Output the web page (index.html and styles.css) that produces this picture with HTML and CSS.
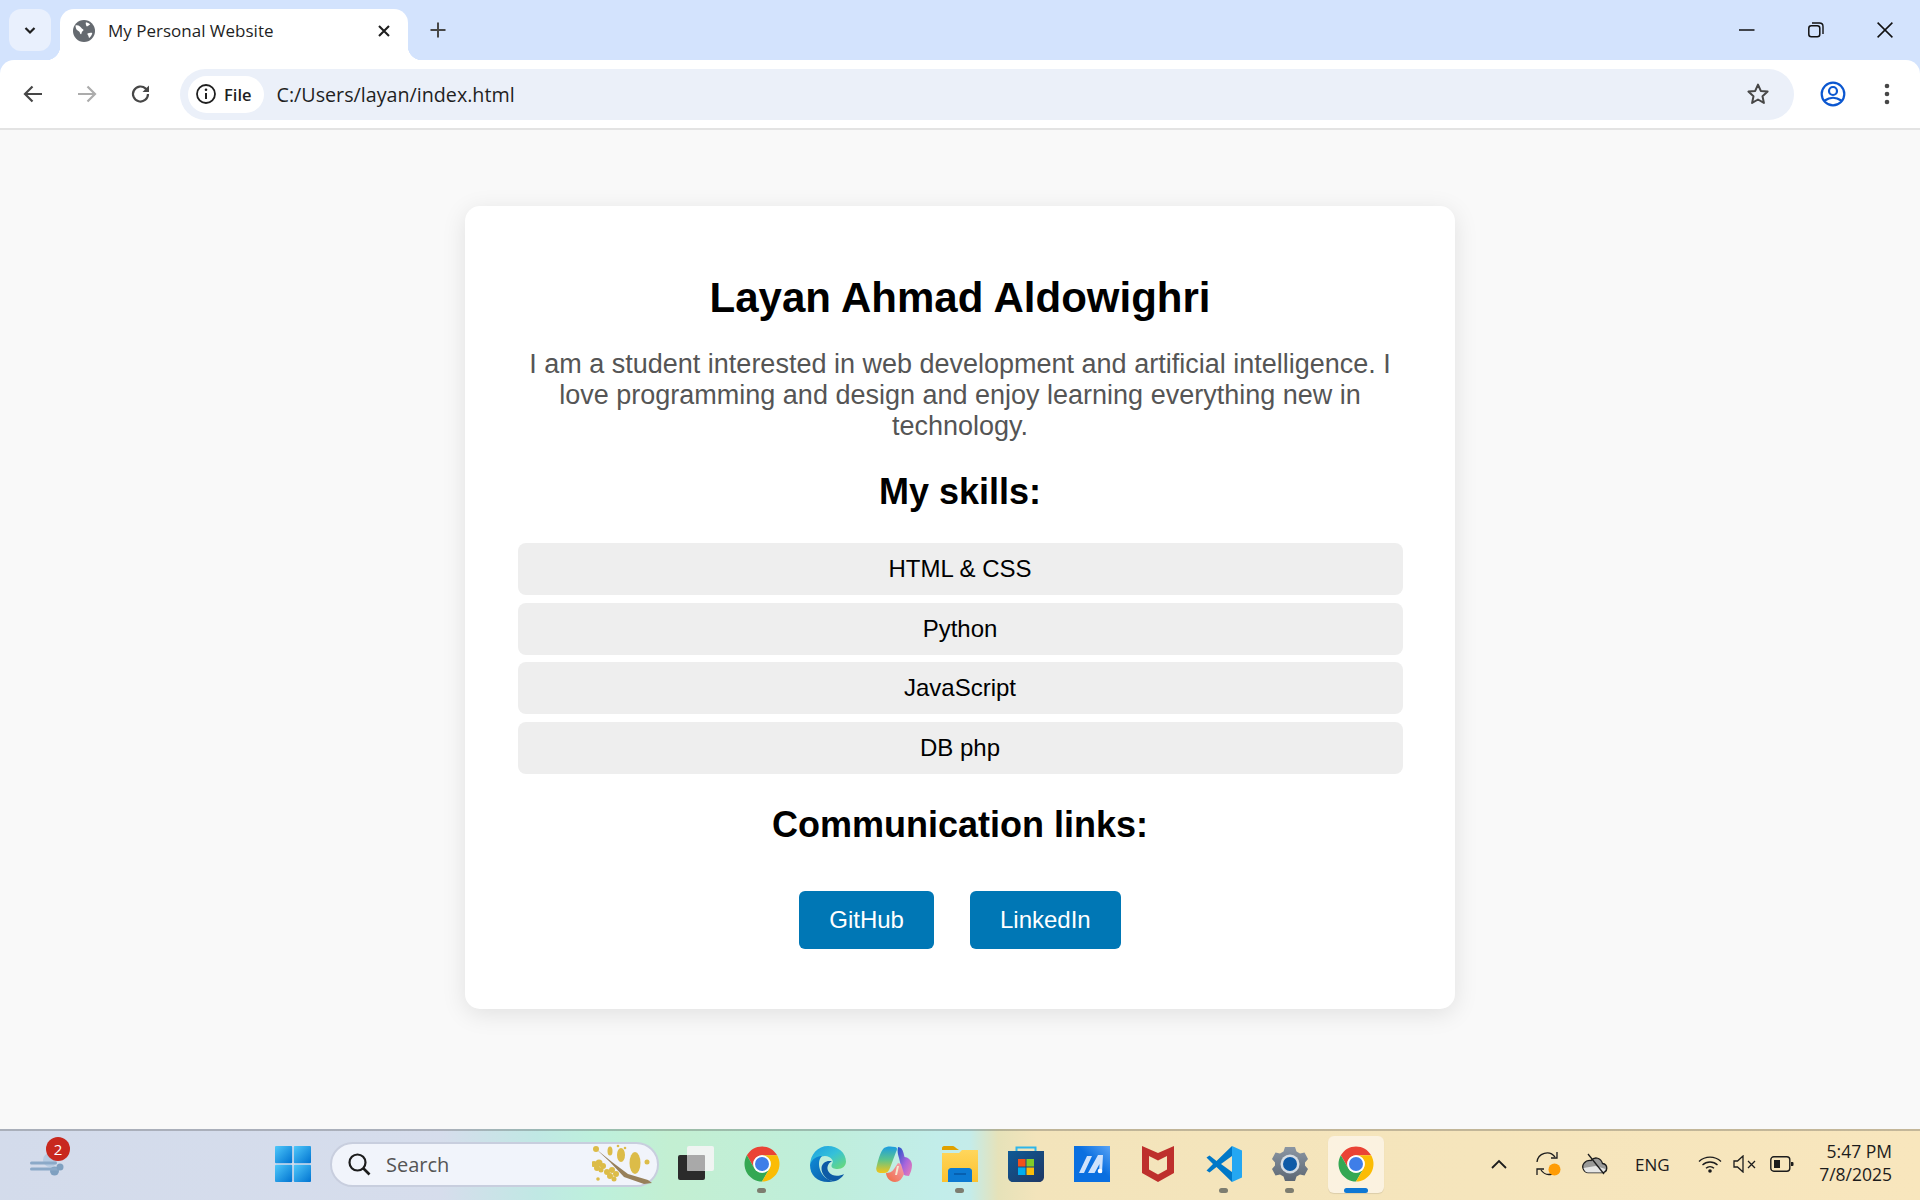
FILE: index.html
```html
<!DOCTYPE html>
<html lang="en">
<head>
  <meta charset="UTF-8">
  <meta name="viewport" content="width=device-width, initial-scale=1.0">
  <title>My Personal Website</title>
  <link rel="stylesheet" href="styles.css">
</head>
<body>

  <svg class="defs" width="0" height="0" aria-hidden="true">
    <symbol id="chrome" viewBox="0 0 48 48">
      <path fill="#ea4335" d="M6.68 14A20 20 0 0 1 41.32 14H24A10 10 0 0 0 15.34 29Z"/>
      <path fill="#34a853" d="M6.68 14A20 20 0 0 0 24 44L32.66 29A10 10 0 0 1 15.34 29Z"/>
      <path fill="#fbbc04" d="M41.32 14H24A10 10 0 0 1 32.66 29L24 44A20 20 0 0 0 41.32 14Z"/>
      <circle cx="24" cy="24" r="10" fill="#fff"/>
      <circle cx="24" cy="24" r="8" fill="#3f7ee8"/>
    </symbol>
    <linearGradient id="edge-top" x1="0" y1="0" x2="1" y2="1">
      <stop offset="0" stop-color="#1b9de2"/>
      <stop offset=".5" stop-color="#35c1d9"/>
      <stop offset="1" stop-color="#6fdc6e"/>
    </linearGradient>
    <linearGradient id="edge-low" x1="0" y1="0" x2="1" y2="1">
      <stop offset="0" stop-color="#0f8bd8"/>
      <stop offset="1" stop-color="#0c59a4"/>
    </linearGradient>
    <linearGradient id="cop-a" x1="0" y1="0" x2="0" y2="1">
      <stop offset="0" stop-color="#1b9de2"/>
      <stop offset=".5" stop-color="#5cc48c"/>
      <stop offset="1" stop-color="#f5c518"/>
    </linearGradient>
    <linearGradient id="cop-b" x1="0" y1="0" x2="1" y2="1">
      <stop offset="0" stop-color="#1a55c8"/>
      <stop offset=".55" stop-color="#a865dc"/>
      <stop offset="1" stop-color="#f07fb0"/>
    </linearGradient>
    <linearGradient id="cop-c" x1="0" y1="1" x2="1" y2="0">
      <stop offset="0" stop-color="#f06a3c"/>
      <stop offset="1" stop-color="#f4a0b8"/>
    </linearGradient>
    <linearGradient id="win-grad" x1="0" y1="0" x2="1" y2="1">
      <stop offset="0" stop-color="#4fc8fa"/>
      <stop offset="1" stop-color="#0073d1"/>
    </linearGradient>
    <linearGradient id="folder-grad" x1="0" y1="0" x2="0" y2="1">
      <stop offset="0" stop-color="#ffd65c"/>
      <stop offset="1" stop-color="#fcc12e"/>
    </linearGradient>
    <linearGradient id="store-grad" x1="0" y1="0" x2="1" y2="1">
      <stop offset="0" stop-color="#0f5a96"/>
      <stop offset="1" stop-color="#1f3764"/>
    </linearGradient>
    <linearGradient id="ma-grad" x1="0" y1="1" x2="1" y2="0">
      <stop offset=".55" stop-color="#0a6fe0"/>
      <stop offset="1" stop-color="#5aa4f5"/>
    </linearGradient>
    <linearGradient id="gear-grad" x1="0" y1="0" x2="0" y2="1">
      <stop offset="0" stop-color="#8b96a3"/>
      <stop offset="1" stop-color="#5d6874"/>
    </linearGradient>
  </svg>

  <div class="window">
    <header class="browser">
      <div class="tabstrip">
        <button class="tab-search">
          <svg width="14" height="14" viewBox="0 0 14 14"><path d="M2.5 5l4.5 4.5L11.5 5" fill="none" stroke="#1f1f1f" stroke-width="2.2"/></svg>
        </button>
        <div class="tab">
          <svg width="24" height="24" viewBox="0 0 24 24">
            <circle cx="12" cy="12" r="11" fill="#656a70"/>
            <path fill="#fff" d="M3.500 6.500c1.800-.4 3.200 0 4.500 1 1.200.9 1.400 1.800 2.600 2.400 1.300.6 1 1.800-.1 2.400-.8.400-.6 1.600-1.200 2.600-.6.800-1.200-.4-1.500-1.500-.3-1.200-1.600-1.300-2.500-2.100C4.100 10.500 3.500 8 3.500 6.500zM14 3.200c1.600.3 3 1 4.200 2-.6 1-1.800 1.100-2.500 1.900-.6.700-1.300.2-1.500-.6-.2-1-.8-2.300-.2-3.300zM15.500 14.500c1.200-.7 3.200-.9 4.800-.6-.4 2.100-1.500 3.800-3.100 5.100-.7-.7-.4-1.800-1-2.600-.4-.6-1.100-1.300-.7-1.900z"/>
          </svg>
          <span class="tab-title">My Personal Website</span>
          <svg class="tab-close" width="14" height="14" viewBox="0 0 14 14"><path d="M2 2l10 10M12 2L2 12" stroke="#1f1f1f" stroke-width="2.100"/></svg>
        </div>
        <button class="new-tab">
          <svg width="18" height="18" viewBox="0 0 18 18"><path d="M9 1.500v15M1.500 9h15" stroke="#474747" stroke-width="2"/></svg>
        </button>
        <div class="win-controls">
          <span class="win-btn"><svg width="16" height="16" viewBox="0 0 16 16"><path d="M0 8h15.500" stroke="#111" stroke-width="1.500"/></svg></span>
          <span class="win-btn"><svg width="16" height="16" viewBox="0 0 16 16"><rect x=".8" y="3.800" width="11" height="11" rx="2.500" fill="none" stroke="#111" stroke-width="1.500"/><path d="M4 1h7.500c2 0 3.500 1.500 3.500 3.500V12" fill="none" stroke="#111" stroke-width="1.400"/></svg></span>
          <span class="win-btn"><svg width="16" height="16" viewBox="0 0 16 16"><path d="M.6.6l14.800 14.800M15.400.6L.6 15.400" stroke="#111" stroke-width="1.500"/></svg></span>
        </div>
      </div>

      <div class="toolbar">
        <button class="tool-btn">
          <svg width="22" height="22" viewBox="0 0 22 22"><path d="M20 11H3M10.500 3.500L3 11l7.500 7.500" fill="none" stroke="#474747" stroke-width="2.200"/></svg>
        </button>
        <button class="tool-btn">
          <svg width="22" height="22" viewBox="0 0 22 22"><path d="M2 11h17M11.500 3.500L19 11l-7.500 7.500" fill="none" stroke="#acacac" stroke-width="2.200"/></svg>
        </button>
        <button class="tool-btn">
          <svg width="22" height="22" viewBox="0 0 22 22"><path d="M18 11a7.500 7.500 0 1 1-2.300-5.400L18 8" fill="none" stroke="#474747" stroke-width="2.200"/><path d="M19 2.500V9h-6.500z" fill="#474747"/></svg>
        </button>
        <div class="omnibox">
          <div class="file-chip">
            <svg width="22" height="22" viewBox="0 0 22 22"><circle cx="11" cy="11" r="9" fill="none" stroke="#1f1f1f" stroke-width="1.800"/><path d="M11 10v6" stroke="#1f1f1f" stroke-width="2"/><circle cx="11" cy="6.800" r="1.300" fill="#1f1f1f"/></svg>
            <span>File</span>
          </div>
          <span class="url">C:/Users/layan/index.html</span>
          <svg class="star" width="24" height="24" viewBox="0 0 24 24"><path d="M12 2.600l2.800 6.300 6.800.7-5.100 4.600 1.400 6.700-5.900-3.400-5.900 3.400 1.400-6.700-5.100-4.600 6.800-.7z" fill="none" stroke="#474747" stroke-width="2" stroke-linejoin="round"/></svg>
        </div>
        <button class="tool-btn">
          <svg width="26" height="26" viewBox="0 0 26 26"><circle cx="13" cy="13" r="11.300" fill="none" stroke="#0b57d0" stroke-width="2.200"/><circle cx="13" cy="10" r="4" fill="none" stroke="#0b57d0" stroke-width="2.200"/><path d="M4.800 19.500c5-3.600 11.400-3.600 16.400 0" fill="none" stroke="#0b57d0" stroke-width="2.200"/></svg>
        </button>
        <button class="tool-btn">
          <svg width="6" height="24" viewBox="0 0 6 24"><circle cx="3" cy="4" r="2.300" fill="#474747"/><circle cx="3" cy="12" r="2.300" fill="#474747"/><circle cx="3" cy="20" r="2.300" fill="#474747"/></svg>
        </button>
      </div>
    </header>

    <main class="page">
      <section class="card">
        <h1>Layan Ahmad Aldowighri</h1>
        <p class="bio">I am a student interested in web development and artificial intelligence. I love programming and design and enjoy learning everything new in technology.</p>
        <h2 class="skills-title">My skills:</h2>
        <ul class="skills">
          <li>HTML &amp; CSS</li>
          <li>Python</li>
          <li>JavaScript</li>
          <li>DB php</li>
        </ul>
        <h2 class="links-title">Communication links:</h2>
        <div class="links">
          <a href="#">GitHub</a>
          <a href="#">LinkedIn</a>
        </div>
      </section>
    </main>

    <footer class="taskbar">
      <div class="weather">
        <svg width="36" height="36" viewBox="0 0 36 36">
          <circle cx="20" cy="14" r="7" fill="#b6cbe2"/>
          <circle cx="24.500" cy="25" r="4.500" fill="#7fa0c0"/>
          <path d="M1.500 17h24M1.500 23h26" stroke="#8ba9c8" stroke-width="3" stroke-linecap="round"/>
          <circle cx="30" cy="21" r="3.500" fill="#7fa0c0"/>
        </svg>
        <span class="badge">2</span>
      </div>

      <span class="start">
        <svg width="36" height="36" viewBox="0 0 36 36">
          <rect x="0" y="0" width="17.200" height="17.200" rx="1" fill="url(#win-grad)"/>
          <rect x="18.800" y="0" width="17.200" height="17.200" rx="1" fill="url(#win-grad)"/>
          <rect x="0" y="18.800" width="17.200" height="17.200" rx="1" fill="url(#win-grad)"/>
          <rect x="18.800" y="18.800" width="17.200" height="17.200" rx="1" fill="url(#win-grad)"/>
        </svg>
      </span>

      <div class="search">
        <svg width="24" height="24" viewBox="0 0 24 24"><circle cx="10.500" cy="10.500" r="8" fill="none" stroke="#1c1c1c" stroke-width="2.200"/><path d="M16 16l6.500 6.500" stroke="#1c1c1c" stroke-width="2.600"/></svg>
        <span>Search</span>
        <svg class="twig" width="62" height="42" viewBox="0 0 62 42">
          <path d="M4 6l16 13 16 12 20 6 4 3-8 1-20-7-14-15z" fill="#97805a"/>
          <g fill="#dcbc48">
            <circle cx="2" cy="21" r="3"/><circle cx="7" cy="20" r="3.500"/><circle cx="11" cy="23" r="3"/><circle cx="5" cy="25" r="3"/><circle cx="9" cy="27" r="2.500"/>
            <circle cx="15" cy="29" r="3"/><circle cx="20" cy="27" r="3"/><circle cx="24" cy="31" r="3"/><circle cx="18" cy="33" r="3"/><circle cx="22" cy="36" r="2.500"/>
            <ellipse cx="29" cy="12" rx="4" ry="7"/>
            <ellipse cx="43" cy="20" rx="5.500" ry="11"/>
            <ellipse cx="18" cy="8" rx="2.500" ry="4.500"/>
            <circle cx="4" cy="6" r="3"/>
            <circle cx="55" cy="19" r="2.500"/>
            <circle cx="6" cy="36" r="1.800"/>
            <circle cx="26" cy="3" r="1.300"/>
            <circle cx="33" cy="5" r="1.300"/>
          </g>
        </svg>
      </div>

      <div class="apps">
        <span class="app">
          <svg width="36" height="36" viewBox="0 0 36 36">
            <rect x="0" y="9" width="27" height="25" rx="2" fill="#2b2b2b"/>
            <rect x="9" y="0" width="27" height="25" rx="2" fill="#f4f4f4" fill-opacity=".92"/>
            <rect x="9" y="9" width="18" height="16" rx="1" fill="#a9a9a9"/>
          </svg>
        </span>
        <span class="app open">
          <svg width="36" height="36"><use href="#chrome" x="-3" y="-3" width="42" height="42"/></svg>
        </span>
        <span class="app">
          <svg width="36" height="36" viewBox="0 0 36 36">
            <path fill="url(#edge-top)" d="M18 0C28 0 36 7 36 15.500c0 4.500-3.500 7.500-8.500 7.500-3.500 0-6-1-6-3 0-2.500 2.500-3.500.5-6.500C20 10.500 16 9 11.500 10.500 5 12.500 1 18 0 20 0 8 8 0 18 0z"/>
            <path fill="url(#edge-low)" d="M0 19C2 12 8 10 12 10c-3 3-3.500 7-2.500 12 1.500 7 8 13 15 13.300C22 35.800 20 36 18 36 7 36 0 29 0 19z"/>
            <path fill="#0d5ba6" d="M22 15.500c-4.500-1.500-10 1-10.500 6.500-.4 6 5.500 13 12.500 13.200 4-.4 8-3.400 10-7.200-3 1.700-8 2.500-11.500 1-3.500-1.500-5.500-5-5-8 .4-2.500 2-5 4.500-5.500z"/>
          </svg>
        </span>
        <span class="app">
          <svg width="36" height="36" viewBox="0 0 36 36">
            <path fill="url(#cop-a)" d="M8 2c2-1.500 6-2 11-1 3 .5 2 3 1 5l-6 16c-1 3-3 5-6 5H4c-3 0-4.500-3-3.500-6C2 15 4 6 8 2z"/>
            <path fill="url(#cop-b)" d="M22 1c3 0 4.500 2 5.500 6l1 4c3 0 7.500 3 7.500 8 0 4-1.500 8-3 11-3 0-5-1-6-2l-4-16c-1-3-2-7-1-11z"/>
            <path fill="url(#cop-c)" d="M10 27c3 0 6-1 8-4l4-6 3 1 3 10c-2 5-5 8-9 8-6 0-9-6-9-9z"/>
            <path fill="#f4e8d0" d="M19 29l2-9h2l-2 9z"/>
          </svg>
        </span>
        <span class="app open">
          <svg width="36" height="36" viewBox="0 0 36 36">
            <path fill="#e0a100" d="M0 2c0-1 .8-2 2-2h9c1 0 2 1 3 2l3 2h-17z"/>
            <path fill="url(#folder-grad)" d="M0 7h17l3-3h16v32H0z"/>
            <path fill="#0c7ad2" d="M6 36V25c0-1.600 1.400-3 3-3h18c1.600 0 3 1.400 3 3v11z"/>
            <path stroke="#0558a5" stroke-width="1.500" d="M12 28h12"/>
          </svg>
        </span>
        <span class="app">
          <svg width="36" height="36" viewBox="0 0 36 36">
            <path d="M8.500 7V1.500h19V7" fill="none" stroke="#2eb6ea" stroke-width="2"/>
            <path fill="url(#store-grad)" d="M0 5h36v26c0 2.500-2 5-4.500 5h-27C2 36 0 33.500 0 31z"/>
            <rect x="10" y="13" width="7.500" height="7.500" fill="#f1511b"/>
            <rect x="18.500" y="13" width="7.500" height="7.500" fill="#80cc28"/>
            <rect x="10" y="21.500" width="7.500" height="7.500" fill="#00adef"/>
            <rect x="18.500" y="21.500" width="7.500" height="7.500" fill="#fbbc09"/>
          </svg>
        </span>
        <span class="app">
          <svg width="36" height="36" viewBox="0 0 36 36">
            <rect width="36" height="36" fill="url(#ma-grad)"/>
            <path fill="#cfe2fb" d="M5 27l8-17h5L10 27zM14 27l10-18h5l-1 18h-3l.5-9-5 9z"/>
            <circle cx="26" cy="25" r="2.300" fill="#fff"/>
          </svg>
        </span>
        <span class="app">
          <svg width="32" height="36" viewBox="0 0 32 36">
            <path fill="#be2f2c" fill-rule="evenodd" d="M0 0l16 7 16-7v27l-16 9-16-9zM7 10v13.500l9 5 9-5V10l-9 4.500z"/>
          </svg>
        </span>
        <span class="app open">
          <svg width="36" height="36" viewBox="0 0 36 36">
            <path fill="#0078c8" d="M26 0L10.500 15 3.500 9.500.5 11.500 7 18 .5 24.500l3 2 7-5.500L26 36V26L15 18 26 10z"/>
            <path fill="#24a7f2" d="M26 0l10 4.500v27L26 36z"/>
          </svg>
        </span>
        <span class="app open">
          <svg width="36" height="36" viewBox="0 0 36 36">
            <path fill="url(#gear-grad)" d="M13 1h10l1.500 4.500 3.500 2 4.500-1L36 13l-3 3.500v3l3 3.500-3.500 6.500-4.500-1-3.500 2L23 35H13l-1.500-4.500-3.500-2-4.500 1L0 23l3-3.500v-3L0 13l3.500-6.500 4.500 1 3.500-2z"/>
            <circle cx="18" cy="18" r="9.500" fill="#d5dde4"/>
            <circle cx="18" cy="18" r="7" fill="#0d5aa7"/>
          </svg>
        </span>
        <span class="app active">
          <svg width="36" height="36"><use href="#chrome" x="-3" y="-3" width="42" height="42"/></svg>
        </span>
      </div>

      <div class="tray">
        <svg class="tray-chevron" width="16" height="10" viewBox="0 0 16 10"><path d="M1 9l7-7 7 7" fill="none" stroke="#1c1c1c" stroke-width="1.800"/></svg>
        <svg class="tray-sync" width="26" height="26" viewBox="0 0 26 26">
          <path d="M1 11a10 10 0 0 1 18-5" fill="none" stroke="#1c1c1c" stroke-width="1.300"/>
          <path d="M15 7h6V1" fill="none" stroke="#1c1c1c" stroke-width="1.300"/>
          <path d="M16 23a10 10 0 0 1-11-4" fill="none" stroke="#1c1c1c" stroke-width="1.300"/>
          <path d="M8 18H1v6" fill="none" stroke="#1c1c1c" stroke-width="1.300"/>
          <circle cx="18.500" cy="18.500" r="6" fill="#ff9c05"/>
        </svg>
        <svg class="tray-cloud" width="26" height="22" viewBox="0 0 26 22">
          <path d="M6 19.500h14c6 0 6.500-8 .5-9C19 5 13 3 9 7.500 3 7 -1 12 1.500 16.500c1 2 2.500 3 4.500 3z" fill="#9a9a98" stroke="#1c1c1c" stroke-width="1.300"/>
          <path d="M1.500 15l12-2 10 3c-1 2-2 3.500-4 3.500H6c-2 0-3.500-1.500-4.500-4.500z" fill="#e6e6e4"/>
          <path d="M6 1l16 20" stroke="#1c1c1c" stroke-width="1.300"/>
        </svg>
        <span class="lang">ENG</span>
        <svg class="tray-wifi" width="24" height="18" viewBox="0 0 24 18">
          <path d="M1 6.500a16 16 0 0 1 22 0M4.500 10a11 11 0 0 1 15 0M8 13.300a6 6 0 0 1 8 0" fill="none" stroke="#1c1c1c" stroke-width="1.400"/>
          <circle cx="12" cy="16" r="1.800" fill="#1c1c1c"/>
        </svg>
        <svg class="tray-sound" width="24" height="18" viewBox="0 0 24 18">
          <path d="M1 6h3.500L10 1v16l-5.500-5H1z" fill="none" stroke="#1c1c1c" stroke-width="1.300"/>
          <path d="M15 6l7 7M22 6l-7 7" stroke="#1c1c1c" stroke-width="1.300"/>
        </svg>
        <svg class="tray-battery" width="24" height="16" viewBox="0 0 24 16">
          <rect x=".8" y=".8" width="19" height="14.400" rx="3" fill="none" stroke="#1c1c1c" stroke-width="1.400"/>
          <rect x="4" y="4" width="6" height="8" fill="#1c1c1c"/>
          <path d="M21 6h1.500a1 1 0 0 1 1 1v2a1 1 0 0 1-1 1H21z" fill="#1c1c1c"/>
        </svg>
        <div class="clock">
          <span>5:47 PM</span>
          <span>7/8/2025</span>
        </div>
      </div>
    </footer>
  </div>

</body>
</html>
```

FILE: styles.css
```css
* {
  box-sizing: border-box;
}
body {
  margin: 0;
  padding: 0;
  font-family: "Liberation Sans", Arial, sans-serif;
  background-color: #f9f9f9;
}
button {
  border: none;
  background: none;
  padding: 0;
}
svg {
  display: block;
  flex-shrink: 0;
}
.defs {
  position: absolute;
}
.window {
  display: flex;
  flex-direction: column;
  height: 100vh;
  overflow: hidden;
}

/* browser chrome */
.browser {
  background-color: #d3e3fd;
  font-family: "Open Sans", sans-serif;
  color: #1f1f1f;
}
.tabstrip {
  display: flex;
  height: 60px;
  padding-left: 9px;
}
.tab-search {
  display: flex;
  align-items: center;
  justify-content: center;
  width: 42px;
  height: 42px;
  margin-top: 9px;
  border-radius: 12px;
  background-color: #e9f0fd;
}
.tab {
  position: relative;
  display: flex;
  align-items: center;
  width: 348px;
  height: 51px;
  margin: 9px 0 0 9px;
  padding: 0 17px 8px 12px;
  background-color: #fff;
  border-radius: 14px 14px 0 0;
}
.tab::before,
.tab::after {
  content: "";
  position: absolute;
  bottom: 0;
  width: 14px;
  height: 14px;
}
.tab::before {
  left: -14px;
  background: radial-gradient(circle at 0 0, transparent 14px, #fff 14.5px);
}
.tab::after {
  right: -14px;
  background: radial-gradient(circle at 100% 0, transparent 14px, #fff 14.5px);
}
.tab-title {
  flex: 1;
  margin-left: 12px;
  font-size: 17px;
  white-space: nowrap;
}
.new-tab {
  display: flex;
  align-items: center;
  justify-content: center;
  width: 42px;
  height: 42px;
  margin: 9px 0 0 9px;
}
.win-controls {
  display: flex;
  margin-left: auto;
  padding-right: 1px;
}
.win-btn {
  display: flex;
  align-items: center;
  justify-content: center;
  width: 69px;
  height: 60px;
}
.toolbar {
  display: flex;
  align-items: center;
  height: 70px;
  padding: 0 6px;
  background-color: #fff;
  border-radius: 14px 14px 0 0;
  border-bottom: 2px solid #e3e3e3;
}
.tool-btn {
  display: flex;
  align-items: center;
  justify-content: center;
  width: 54px;
  height: 54px;
}
.omnibox {
  display: flex;
  flex: 1;
  align-items: center;
  height: 51px;
  margin: 0 12px;
  padding: 0 24px 0 8px;
  background-color: #ebf0f9;
  border-radius: 26px;
}
.file-chip {
  display: flex;
  align-items: center;
  gap: 7px;
  height: 37px;
  padding: 0 12px 0 7px;
  background-color: #fff;
  border-radius: 19px;
  font-size: 16.500px;
  font-weight: 600;
}
.url {
  flex: 1;
  margin-left: 13px;
  font-size: 19.700px;
}

/* page content */
.page {
  flex: 1;
  display: flex;
  justify-content: center;
  padding-top: 76px;
  background-color: #f9f9f9;
}
.card {
  width: 990px;
  height: 803px;
  padding: 69px 52.500px 0;
  background-color: #fff;
  border-radius: 15px;
  box-shadow: 0 5px 24px rgba(0, 0, 0, 0.1);
  text-align: center;
}
h1 {
  margin: 0;
  font-size: 42px;
  line-height: 46px;
  color: #000;
}
.bio {
  margin: 28px 0 0;
  font-size: 27px;
  line-height: 30.800px;
  color: #555;
}
h2 {
  margin: 0;
  font-size: 36px;
  line-height: 37px;
  color: #000;
}
.skills-title {
  margin-top: 31.400px;
}
.skills {
  display: flex;
  flex-direction: column;
  gap: 7.800px;
  margin: 33px 0 0;
  padding: 0;
  list-style: none;
}
.skills li {
  height: 52px;
  line-height: 52px;
  background-color: #eee;
  border-radius: 8px;
  font-size: 24px;
  color: #000;
}
.links-title {
  margin-top: 31.600px;
}
.links {
  display: flex;
  justify-content: center;
  gap: 36px;
  margin-top: 48.500px;
}
.links a {
  height: 58px;
  padding: 0 30px;
  line-height: 58px;
  background-color: #0077b5;
  border-radius: 6px;
  color: #fff;
  font-size: 24px;
  text-decoration: none;
}

/* windows taskbar */
.taskbar {
  position: relative;
  display: flex;
  align-items: center;
  height: 71px;
  padding-bottom: 3px;
  border-top: 2px solid rgba(60, 60, 60, 0.28);
  background: linear-gradient(90deg, #d3dbeb 0, #d6ddec 23%, #c0e8e4 28%, #bdf0dc 31%, #c3efd2 35%, #bfeedb 43%, #c2edea 49%, #c4ecea 50.500%, #e6e2b9 52%, #f3e4bb 54%, #f8e6bd 100%);
  font-family: "Open Sans", sans-serif;
  color: #1c1c1c;
}
.weather {
  position: relative;
  width: 36px;
  margin-left: 30px;
}
.badge {
  position: absolute;
  top: -9px;
  left: 16px;
  width: 24px;
  height: 24px;
  border-radius: 50%;
  background-color: #c8281e;
  color: #fff;
  font-size: 15px;
  line-height: 24px;
  text-align: center;
}
.start {
  margin-left: 209px;
}
.search {
  display: flex;
  align-items: center;
  gap: 15px;
  width: 329px;
  height: 45px;
  margin-left: 19px;
  padding: 0 0 0 15px;
  background-color: #f1f4fb;
  border: 2px solid #c8cede;
  border-radius: 23px;
  color: #555;
  font-size: 20px;
}
.twig {
  margin-left: auto;
  margin-right: 3px;
}
.apps {
  display: flex;
  margin-left: 4px;
}
.app {
  position: relative;
  display: flex;
  align-items: center;
  justify-content: center;
  width: 66px;
  height: 57px;
}
.app.open::after {
  content: "";
  position: absolute;
  bottom: 0;
  left: 28px;
  width: 9px;
  height: 5px;
  border-radius: 3px;
  background-color: #7d7d70;
}
.app.active {
  width: 56px;
  margin-left: 5px;
  background-color: #fbf2e0;
  border-radius: 6px;
  box-shadow: 0 1px 1px rgba(0, 0, 0, 0.1);
}
.app.active::after {
  content: "";
  position: absolute;
  bottom: 0;
  left: 16px;
  width: 24px;
  height: 5px;
  border-radius: 3px;
  background-color: #0f78d4;
}
.tray {
  display: flex;
  align-items: center;
  flex: 1;
  margin-left: 107px;
  padding-right: 28px;
}
.tray-sync {
  margin-left: 29px;
}
.tray-cloud {
  margin-left: 20px;
}
.lang {
  margin-left: 27px;
  font-size: 17px;
}
.tray-wifi {
  margin-left: 28px;
}
.tray-sound {
  margin-left: 11px;
}
.tray-battery {
  margin-left: 13px;
}
.clock {
  display: flex;
  flex-direction: column;
  margin-left: auto;
  margin-bottom: 3px;
  font-size: 17.500px;
  line-height: 23px;
  text-align: right;
}
```
